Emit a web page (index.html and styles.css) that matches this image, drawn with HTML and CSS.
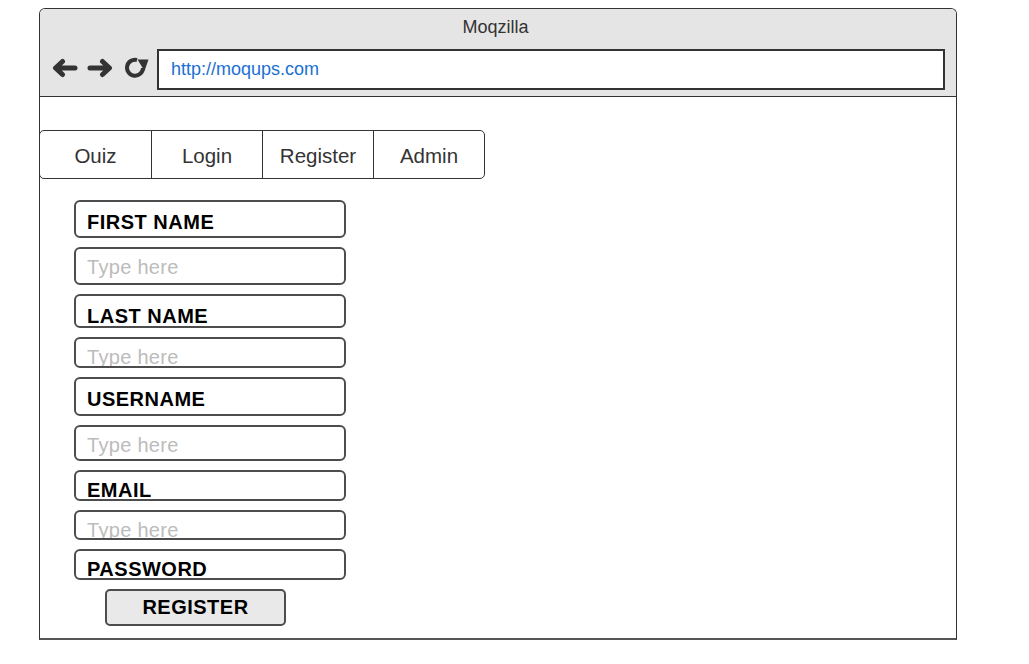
FILE: index.html
```html
<!DOCTYPE html>
<html lang="en">
<head>
<meta charset="utf-8">
<title>Moqzilla</title>
<link rel="stylesheet" href="styles.css">
</head>
<body>
<div class="window">
  <div class="chrome">
    <div class="title">Moqzilla</div>
    <div class="navrow">
      <div class="navicons">
        <svg class="icon-arrow" width="28" height="20" viewBox="0 0 28 20"><path d="M24 10H5M11.5 3.5L4.5 10L11.5 16.5" fill="none" stroke="#333" stroke-width="5" stroke-linecap="round" stroke-linejoin="round"/></svg>
        <svg class="icon-arrow" width="28" height="20" viewBox="0 0 28 20"><path d="M4 10H23M16.5 3.5L23.5 10L16.5 16.5" fill="none" stroke="#333" stroke-width="5" stroke-linecap="round" stroke-linejoin="round"/></svg>
        <svg class="icon-reload" width="26" height="22" viewBox="0 0 26 22"><path d="M14 3A8 8 0 1 0 20 11" fill="none" stroke="#333" stroke-width="4"/><polygon points="14.5,2.5 25.5,2.5 21.5,14" fill="#333"/></svg>
      </div>
      <div class="url">http://moqups.com</div>
    </div>
  </div>
  <div class="page">
    <nav class="tabs">
      <div class="tab">Ouiz</div>
      <div class="tab">Login</div>
      <div class="tab">Register</div>
      <div class="tab">Admin</div>
    </nav>
    <div class="form">
      <div class="field label h38">FIRST NAME</div>
      <div class="field hint h38">Type here</div>
      <div class="field label h34">LAST NAME</div>
      <div class="field hint h31">Type here</div>
      <div class="field label h39">USERNAME</div>
      <div class="field hint h36">Type here</div>
      <div class="field label tight h31">EMAIL</div>
      <div class="field hint h30">Type here</div>
      <div class="field label tight h31">PASSWORD</div>
      <div class="button">REGISTER</div>
    </div>
  </div>
</div>
</body>
</html>
```
FILE: styles.css
```css
html, body {
  margin: 0;
  padding: 0;
  background: #fff;
  font-family: "Liberation Sans", Arial, sans-serif;
}

.window {
  box-sizing: border-box;
  margin: 8px 0 0 39px;
  width: 918px;
  height: 632px;
  border: 1px solid #333;
  border-bottom: 2px solid #555;
  border-radius: 6px 6px 0 0;
}

.chrome {
  background: #e5e5e5;
  border-radius: 5px 5px 0 0;
  border-bottom: 1px solid #333;
  height: 88px;
  padding-top: 8px;
  box-sizing: border-box;
}

.title {
  font-size: 18px;
  line-height: 20px;
  height: 20px;
  color: #333;
  text-align: center;
  padding-right: 5px;
}

.navrow {
  display: flex;
  align-items: center;
  margin-top: 12px;
  padding-left: 11px;
  padding-right: 11px;
}

.navicons {
  display: flex;
  align-items: center;
  gap: 7px;
  width: 106px;
  margin-bottom: 3px;
}

.icon-reload {
  margin-left: 2px;
}

.url {
  flex: 1;
  box-sizing: border-box;
  height: 41px;
  border: 2px solid #333;
  background: #fff;
  color: #1a6fd4;
  font-size: 18px;
  line-height: 37px;
  padding-left: 12px;
}

.page {
  padding-top: 33px;
}

.tabs {
  display: flex;
  box-sizing: border-box;
  margin-left: -1px;
  width: 446px;
  height: 49px;
  border: 1px solid #333;
  border-radius: 5px;
}

.tab {
  box-sizing: border-box;
  width: 111px;
  height: 47px;
  padding-top: 3px;
  line-height: 44px;
  text-align: center;
  font-size: 20.5px;
  color: #333;
}

.tab + .tab {
  border-left: 1px solid #333;
}

.form {
  display: flex;
  flex-direction: column;
  gap: 9px;
  margin: 21px 0 0 34px;
  width: 272px;
}

.field {
  box-sizing: border-box;
  width: 272px;
  border: 2px solid #4d4d4d;
  border-radius: 6px;
  overflow: hidden;
  padding-left: 11px;
  font-size: 20px;
  line-height: 20px;
  white-space: nowrap;
}

.label {
  padding-top: 10px;
  font-weight: bold;
  letter-spacing: 0.5px;
  color: #000;
}

.label.tight {
  padding-top: 8px;
}

.hint {
  padding-top: 8px;
  color: #bcbcbc;
  letter-spacing: 0.3px;
}

.h30 { height: 30px; }
.h31 { height: 31px; }
.h34 { height: 34px; }
.h36 { height: 36px; }
.h38 { height: 38px; }
.h39 { height: 39px; }

.button {
  box-sizing: border-box;
  margin-left: 31px;
  width: 181px;
  height: 37px;
  background: #e9e9e9;
  border: 2px solid #4d4d4d;
  border-radius: 5px;
  text-align: center;
  font-size: 20px;
  font-weight: bold;
  letter-spacing: 0.5px;
  line-height: 33px;
  color: #000;
}
```
